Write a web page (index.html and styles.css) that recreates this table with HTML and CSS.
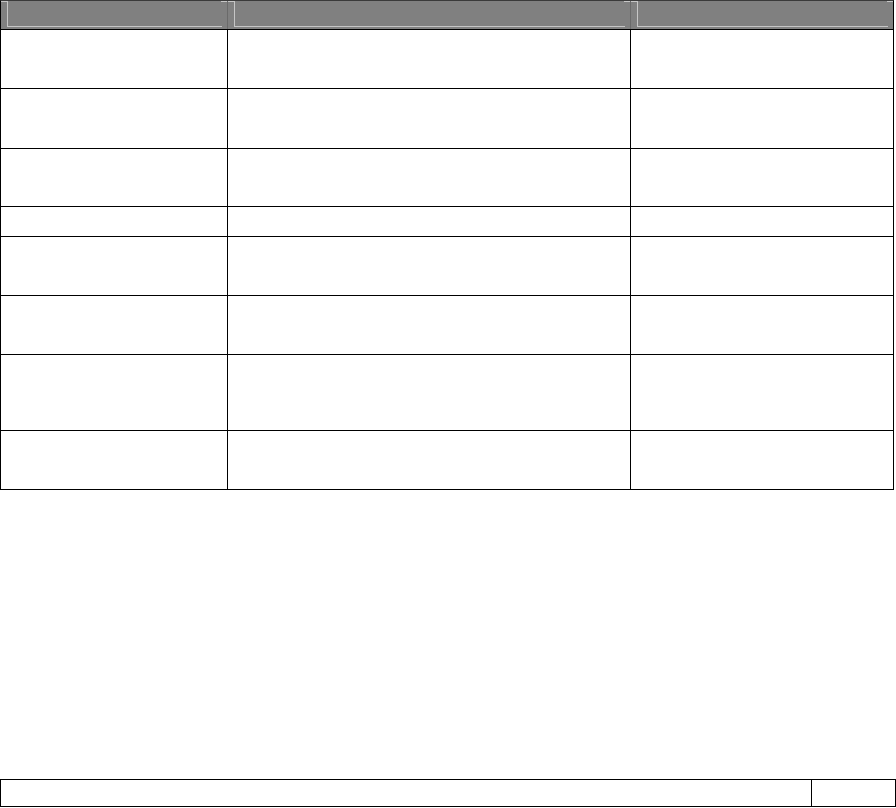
FILE: index.html
```html
<!DOCTYPE html>
<html>
<head>
<meta charset="utf-8">
<link rel="stylesheet" href="styles.css">
</head>
<body>
<div class="page">
  <div class="grid">
    <div class="row head">
      <div class="cell c1"><div class="bevel"></div></div>
      <div class="cell c2"><div class="bevel"></div></div>
      <div class="cell c3"><div class="bevel"></div></div>
    </div>
    <div class="row h58"><div class="cell c1"></div><div class="cell c2"></div><div class="cell c3"></div></div>
    <div class="row h59"><div class="cell c1"></div><div class="cell c2"></div><div class="cell c3"></div></div>
    <div class="row h57"><div class="cell c1"></div><div class="cell c2"></div><div class="cell c3"></div></div>
    <div class="row h29"><div class="cell c1"></div><div class="cell c2"></div><div class="cell c3"></div></div>
    <div class="row h58"><div class="cell c1"></div><div class="cell c2"></div><div class="cell c3"></div></div>
    <div class="row h58"><div class="cell c1"></div><div class="cell c2"></div><div class="cell c3"></div></div>
    <div class="row h75"><div class="cell c1"></div><div class="cell c2"></div><div class="cell c3"></div></div>
    <div class="row h58"><div class="cell c1"></div><div class="cell c2"></div><div class="cell c3"></div></div>
  </div>
  <div class="footer">
    <div class="fcell main"></div>
    <div class="fcell num"></div>
  </div>
</div>
</body>
</html>
```
FILE: styles.css
```css
html, body {
  margin: 0;
  padding: 0;
  background: #ffffff;
  font-family: "Liberation Sans", Arial, sans-serif;
}
.page {
  width: 896px;
  height: 808px;
  display: flex;
  flex-direction: column;
}
.grid {
  width: 894px;
  box-sizing: border-box;
  border-left: 1px solid #000;
  border-right: 1px solid #000;
  border-top: 1px solid #3a3a3a;
  display: flex;
  flex-direction: column;
}
.row {
  display: flex;
  border-bottom: 1px solid #000;
}
.cell {
  box-sizing: border-box;
}
.c1 { width: 227px; border-right: 1px solid #000; }
.c2 { width: 403px; border-right: 1px solid #000; }
.c3 { width: 262px; }
.head { height: 28px; }
.head .cell {
  background-color: #808080;
  background-image:
    linear-gradient(#c6c6c6, #c6c6c6),
    linear-gradient(#c6c6c6, #c6c6c6);
  background-repeat: no-repeat;
  background-size: 7px 1px, 6px 1px;
  background-position: left top, right top;
}
.head .c1, .head .c2 { border-right: 1px solid #6a6a6a; }
.bevel {
  margin: 0 5px 0 6px;
  height: 26px;
  box-sizing: border-box;
  border-left: 1px solid #c6c6c6;
  border-bottom: 1px solid #c6c6c6;
}
.h58 { height: 58px; }
.h59 { height: 59px; }
.h57 { height: 57px; }
.h29 { height: 29px; }
.h75 { height: 75px; }

.footer {
  margin-top: 289px;
  width: 896px;
  height: 28px;
  box-sizing: border-box;
  border: 1px solid #000;
  display: flex;
}
.fcell.main {
  width: 810px;
  border-right: 1px solid #000;
}
.fcell.num {
  flex: 1;
}
```
